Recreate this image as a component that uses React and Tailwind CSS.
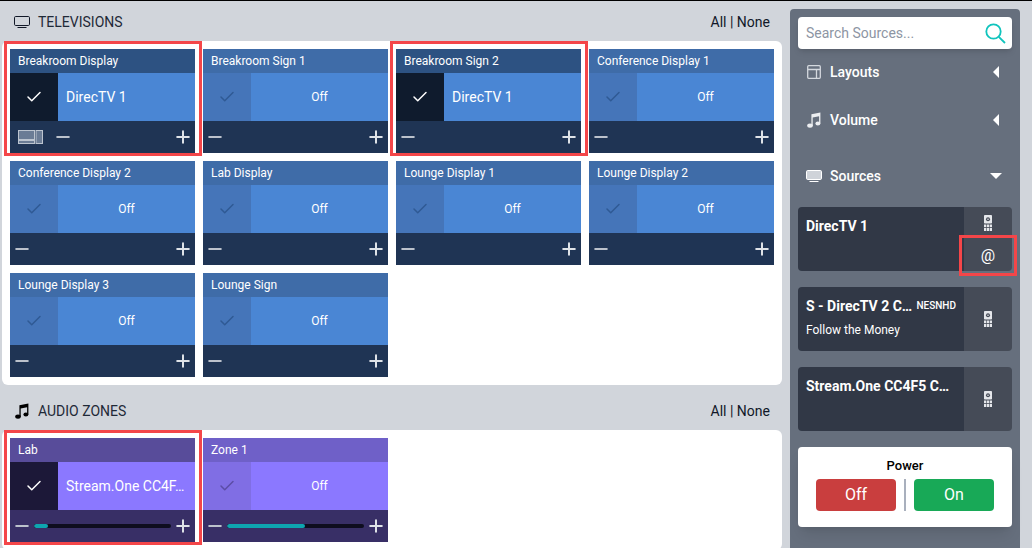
import { Check, Minus, Plus } from "lucide-react";

const tvs = [
  { name: "Breakroom Display", source: "DirecTV 1", on: true, layout: true },
  { name: "Breakroom Sign 1" },
  { name: "Breakroom Sign 2", source: "DirecTV 1", on: true },
  { name: "Conference Display 1" },
  { name: "Conference Display 2" },
  { name: "Lab Display" },
  { name: "Lounge Display 1" },
  { name: "Lounge Display 2" },
  { name: "Lounge Display 3" },
  { name: "Lounge Sign" },
];

const zones = [
  { name: "Lab", source: "Stream.One CC4F…", on: true, level: 10 },
  { name: "Zone 1", level: 57 },
];

function TvIcon({ className, fill = "none" }) {
  return (
    <svg viewBox="0 0 16 12" className={className} fill={fill} stroke="currentColor" strokeWidth="1">
      <rect x="0.5" y="0.5" width="15" height="9" rx="1.2" />
      <path d="M3.500 11.500h9" />
    </svg>
  );
}

function NoteIcon({ className }) {
  return (
    <svg viewBox="0 0 14 16" className={className} fill="currentColor">
      <path d="M4.400 2.300 13.400 0.400v10.800h-1.300V4.200L5.700 5.500v8.300H4.400z" />
      <ellipse cx="3" cy="13.600" rx="2.800" ry="2.200" />
      <ellipse cx="10.900" cy="11.500" rx="2.500" ry="2" />
    </svg>
  );
}

function RemoteIcon() {
  return (
    <svg viewBox="0 0 8 16" className="w-2 h-4" fill="#e5e7eb">
      <rect x="0" y="0" width="8" height="8.500" rx="0.800" />
      <circle cx="4" cy="4.300" r="2" fill="#454b57" />
      <circle cx="4" cy="4.300" r="0.800" />
      <rect x="0" y="9.500" width="2.300" height="2.500" />
      <rect x="2.900" y="9.500" width="2.200" height="2.500" />
      <rect x="5.700" y="9.500" width="2.300" height="2.500" />
      <rect x="0" y="12.800" width="2.300" height="3.200" />
      <rect x="2.900" y="12.800" width="2.200" height="3.200" />
      <rect x="5.700" y="12.800" width="2.300" height="3.200" />
    </svg>
  );
}

function LayoutIcon() {
  return (
    <svg viewBox="0 0 25 14" className="w-[25px] h-[14px] ml-[6px] mr-[10px] shrink-0" fill="#6b7c95" stroke="#bcc4cf" strokeWidth="1">
      <rect x="0.500" y="0.500" width="16" height="9" />
      <rect x="0.500" y="10.500" width="16" height="3" />
      <rect x="18" y="0.500" width="6.500" height="13" />
    </svg>
  );
}

function Tile({ tile, audio }) {
  const header = audio ? (tile.on ? "bg-[#584c9a]" : "bg-[#6f60c8]") : tile.on ? "bg-[#2d5282]" : "bg-[#3f6ca8]";
  const body = audio ? "bg-[#8b78ff]" : "bg-[#4a86d4]";
  const bottom = audio ? "bg-[#382f66]" : "bg-[#1f3454]";
  const box = audio
    ? tile.on ? "bg-[#1c1838] text-white" : "bg-[#806ee4] text-[#5b4da6]"
    : tile.on ? "bg-[#0f1b2d] text-white" : "bg-[#4575b9] text-[#2f5a94]";

  return (
    <div className="relative h-[104px] flex flex-col text-white">
      <div className={`${header} h-6 px-2 flex items-center text-xs whitespace-nowrap`}>{tile.name}</div>
      <div className={`${body} h-12 flex`}>
        <div className={`${box} w-12 shrink-0 flex items-center justify-center`}>
          <Check size={18} strokeWidth={2} />
        </div>
        {tile.source ? (
          <div className="flex-1 min-w-0 px-2 flex items-center text-sm whitespace-nowrap">{tile.source}</div>
        ) : (
          <div className="flex-1 flex items-center justify-center text-xs">Off</div>
        )}
      </div>
      <div className={`${bottom} h-8 flex items-center px-[2px] text-[#bcc2cc]`}>
        {tile.layout ? <LayoutIcon /> : null}
        <Minus size={20} strokeWidth={2.4} className="shrink-0" />
        {audio ? (
          <div className="flex-1 mx-[2px] h-1 rounded-full bg-[#0e0d1f] overflow-hidden">
            <div className="h-full rounded-full bg-[#0ea5b0]" style={{ width: `${tile.level}%` }} />
          </div>
        ) : (
          <div className="flex-1" />
        )}
        <Plus size={20} strokeWidth={2.4} className="shrink-0 text-[#dfe3e8]" />
      </div>
      {tile.on && (
        <div className="absolute -left-[6px] -right-[7px] -top-2 -bottom-[3px] border-[3px] border-[#f44649] pointer-events-none" />
      )}
    </div>
  );
}

function Section({ icon, title, tiles, audio, className }) {
  return (
    <section className={className}>
      <div className="h-10 flex items-center justify-between pl-3 pr-3 pt-[2px] text-sm text-[#1f2937]">
        <div className="flex items-center gap-2">
          <span className="w-4 flex justify-center">{icon}</span>
          <span>{title}</span>
        </div>
        <span className="text-gray-900">All | None</span>
      </div>
      <div className="bg-white rounded-md p-2 grid grid-cols-4 gap-2">
        {tiles.map((t) => (
          <Tile key={t.name} tile={t} audio={audio} />
        ))}
      </div>
    </section>
  );
}

function MenuRow({ icon, label, open, className }) {
  return (
    <div className={`flex items-center pl-2 text-white text-sm font-medium ${className}`}>
      <span className="w-4 mr-2 flex justify-center">{icon}</span>
      <span className="flex-1">{label}</span>
      {open ? (
        <span className="mr-[10px] w-0 h-0 border-x-[6px] border-x-transparent border-t-[6px] border-t-white" />
      ) : (
        <span className="mr-[13px] w-0 h-0 border-y-[6px] border-y-transparent border-r-[6px] border-r-white" />
      )}
    </div>
  );
}

function SourceCard({ name, tag, detail, at }) {
  return (
    <div className="h-16 rounded flex overflow-hidden mb-4">
      <div className="w-[166px] shrink-0 bg-[#313846] px-2 pt-[10px] text-white">
        <div className="flex items-center justify-between text-sm font-bold leading-[18px] whitespace-nowrap">
          <span>{name}</span>
          {tag && <span className="text-[10px] font-medium">{tag}</span>}
        </div>
        {detail && <div className="text-xs mt-[7px]">{detail}</div>}
      </div>
      <div className="flex-1 bg-[#454b57] flex flex-col items-center justify-center">
        {at ? (
          <>
            <div className="h-8 flex items-center"><RemoteIcon /></div>
            <div className="h-8 flex items-center pt-[2px] text-white text-base">@</div>
          </>
        ) : (
          <RemoteIcon />
        )}
      </div>
    </div>
  );
}

export default function App() {
  return (
    <div className="h-[548px] overflow-hidden bg-[#d1d5db] border-t border-black flex font-['Roboto',sans-serif]">
      <main className="w-[790px] shrink-0 pl-[2px] pr-2">
        <Section
          icon={<TvIcon className="w-4 h-3 text-[#111827]" />}
          title="TELEVISIONS"
          tiles={tvs}
        />
        <Section
          icon={<NoteIcon className="w-[14px] h-4 text-black" />}
          title="AUDIO ZONES"
          tiles={zones}
          audio
          className="mt-[5px]"
        />
      </main>

      <aside className="relative w-[230px] mt-2 rounded-t bg-[#666f7d] px-2 pt-2">
        <div className="h-8 bg-white rounded shadow-md flex items-center justify-between pl-2 pr-[6px] text-sm text-[#8d95a3]">
          <span>Search Sources...</span>
          <svg viewBox="0 0 21 21" className="w-[21px] h-[21px]" fill="none" stroke="#10c4bd" strokeWidth="1.800">
            <circle cx="8.500" cy="8.500" r="7.200" />
            <path d="M13.800 13.800 20 20" />
          </svg>
        </div>
        <MenuRow
          className="mt-[13px]"
          label="Layouts"
          icon={
            <svg viewBox="0 0 14 14" className="w-[14px] h-[14px]" fill="none" stroke="#d4d8de" strokeWidth="1.300">
              <rect x="0.700" y="0.700" width="12.600" height="12.600" rx="1" />
              <path d="M0.700 4.500h12.600M9.500 4.500v8.800" />
            </svg>
          }
        />
        <MenuRow className="mt-[28px]" label="Volume" icon={<NoteIcon className="w-[14px] h-4 text-[#eceef1]" />} />
        <MenuRow
          className="mt-[36px]"
          label="Sources"
          open
          icon={<TvIcon className="w-4 h-3 text-white" fill="#cfd3d9" />}
        />

        <div className="mt-[21px]">
          <SourceCard name="DirecTV 1" at />
          <SourceCard name="S - DirecTV 2 C…" tag="NESNHD" detail="Follow the Money" />
          <SourceCard name="Stream.One CC4F5 C…" />
        </div>

        <div className="h-20 bg-white rounded shadow-lg flex flex-col items-center pt-[11px]">
          <div className="text-[13px] font-medium text-black leading-[16px] mb-[5px]">Power</div>
          <div className="flex items-center gap-2">
            <button className="w-20 h-8 rounded bg-[#c93e3e] text-white text-base">Off</button>
            <div className="w-[2px] h-8 bg-[#a9b0bd]" />
            <button className="w-20 h-8 rounded bg-[#18a957] text-white text-base">On</button>
          </div>
        </div>

        <div className="absolute left-[169px] top-[226px] w-[58px] h-[41px] border-[3px] border-[#f44649] pointer-events-none" />
      </aside>
    </div>
  );
}
